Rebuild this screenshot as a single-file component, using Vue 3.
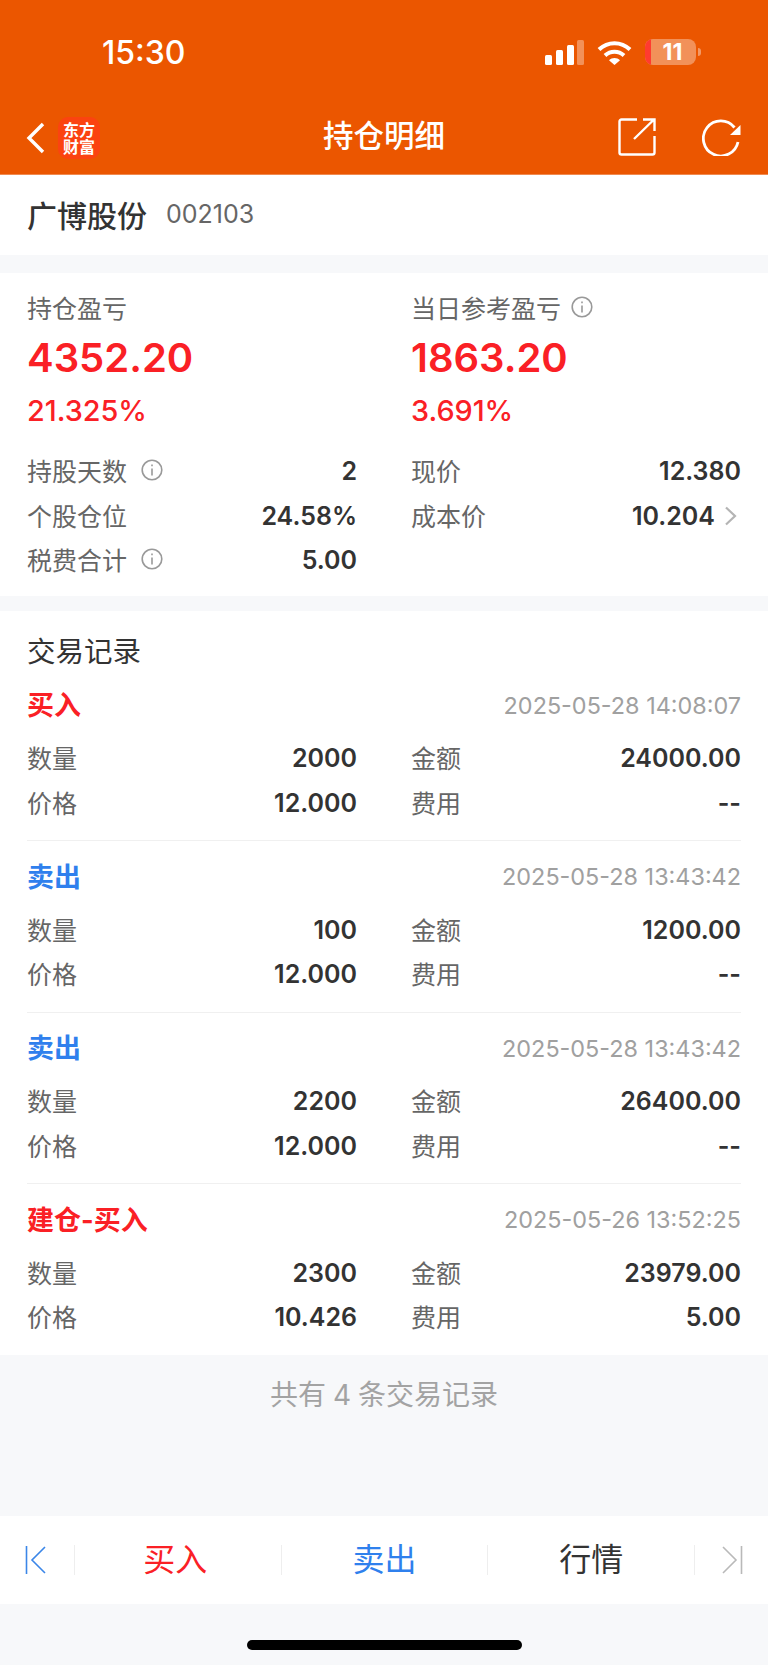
<template>
  <div class="page">
    <header class="top">
      <div class="status">
        <span class="time">15:30</span>
        <div class="status-icons">
          <svg width="39" height="25" viewBox="0 0 39 25">
            <rect x="0" y="15" width="7" height="10" rx="1.5" fill="#fff" />
            <rect x="11" y="10" width="7" height="15" rx="1.5" fill="#fff" />
            <rect x="22" y="5" width="7" height="20" rx="1.5" fill="#fff" />
            <rect x="32" y="0" width="7" height="25" rx="1.5" fill="#fff" fill-opacity="0.35" />
          </svg>
          <svg width="35" height="25" viewBox="0 0 35 25">
            <path d="M2 9.5C11 1 24 1 33 9.5" fill="none" stroke="#fff" stroke-width="4" />
            <path d="M8 15.5C13.5 10.5 21.5 10.5 27 15.5" fill="none" stroke="#fff" stroke-width="4" />
            <path d="M12 20.2C15 17.4 20 17.4 23 20.2L17.5 25Z" fill="#fff" />
          </svg>
          <div class="battery">
            <div class="battery-body"><span class="battery-red"></span><span class="battery-num">11</span></div>
            <span class="battery-tip"></span>
          </div>
        </div>
      </div>
      <nav class="nav">
        <div class="nav-left">
          <svg width="20" height="32" viewBox="0 0 20 32">
            <path d="M17 2L3 16L17 30" fill="none" stroke="#fff" stroke-width="3.4" />
          </svg>
          <div class="logo">东方财富</div>
        </div>
        <h1 class="nav-title">持仓明细</h1>
        <div class="nav-right">
          <svg width="38" height="38" viewBox="0 0 38 38">
            <path d="M19 1.5H3.5a2 2 0 0 0-2 2V34.5a2 2 0 0 0 2 2H34.500a2 2 0 0 0 2-2V18" fill="none" stroke="#fff" stroke-width="2.4" />
            <path d="M16 21L36 1.500M25 1.500H36.500V13" fill="none" stroke="#fff" stroke-width="2.4" />
          </svg>
          <svg width="39" height="38" viewBox="0 0 39 38">
            <path d="M32.500 9.500A17.500 17.500 0 1 0 36 24" fill="none" stroke="#fff" stroke-width="2.8" />
            <path d="M38.500 7V17H28Z" fill="#fff" />
          </svg>
        </div>
      </nav>
    </header>

    <section class="stock">
      <span class="stock-name">广博股份</span>
      <span class="stock-code">002103</span>
    </section>

    <section class="summary">
      <div class="summary-top">
        <div class="summary-col">
          <div class="label-line">持仓盈亏</div>
          <div class="big-num">4352.20</div>
          <div class="big-pct">21.325%</div>
        </div>
        <div class="summary-col">
          <div class="label-line">当日参考盈亏<svg class="info info-near" viewBox="0 0 22 22"><circle cx="11" cy="11" r="9.8" /><path d="M11 9.5V16.5" /><path d="M11 5.5V7.3" /></svg></div>
          <div class="big-num">1863.20</div>
          <div class="big-pct">3.691%</div>
        </div>
      </div>
      <div class="stats">
        <div v-for="s in stats" :key="s.label" class="row">
          <span class="row-label">{{ s.label }}<svg v-if="s.info" class="info" viewBox="0 0 22 22"><circle cx="11" cy="11" r="9.8" /><path d="M11 9.5V16.5" /><path d="M11 5.5V7.3" /></svg></span>
          <span class="row-value">{{ s.value }}<svg v-if="s.arrow" class="chev" width="12" height="20" viewBox="0 0 12 20"><path d="M1 1.500L10 10L1 18.500" fill="none" stroke="#b4b4b4" stroke-width="2.2" /></svg></span>
        </div>
      </div>
    </section>

    <section class="trades">
      <h2 class="trades-title">交易记录</h2>
      <div v-for="(t, i) in trades" :key="i" class="trade">
        <div class="trade-head">
          <span class="trade-type" :class="t.color">{{ t.type }}</span>
          <span class="trade-time">{{ t.time }}</span>
        </div>
        <div class="trade-grid">
          <div class="row"><span class="row-label">数量</span><span class="row-value">{{ t.qty }}</span></div>
          <div class="row"><span class="row-label">金额</span><span class="row-value">{{ t.amount }}</span></div>
          <div class="row"><span class="row-label">价格</span><span class="row-value">{{ t.price }}</span></div>
          <div class="row"><span class="row-label">费用</span><span class="row-value">{{ t.fee }}</span></div>
        </div>
      </div>
    </section>

    <div class="total">共有<span class="total-num">4</span>条交易记录</div>

    <div class="bar">
      <div class="bar-end">
        <svg width="22" height="28" viewBox="0 0 22 28">
          <path d="M1.5 0V28" stroke="#3b86e8" stroke-width="1.6" />
          <path d="M20 1L7 14L20 27" fill="none" stroke="#3b86e8" stroke-width="1.6" />
        </svg>
      </div>
      <button class="bar-btn red buy">买入</button>
      <button class="bar-btn blue">卖出</button>
      <button class="bar-btn dark">行情</button>
      <div class="bar-end last">
        <svg width="22" height="28" viewBox="0 0 22 28">
          <path d="M20.5 0V28" stroke="#b9b9b9" stroke-width="1.6" />
          <path d="M2 1L15 14L2 27" fill="none" stroke="#b9b9b9" stroke-width="1.6" />
        </svg>
      </div>
    </div>

    <div class="home-area"><span class="home"></span></div>
  </div>
</template>

<script setup>
const stats = [
  { label: '持股天数', value: '2', info: true },
  { label: '现价', value: '12.380' },
  { label: '个股仓位', value: '24.58%' },
  { label: '成本价', value: '10.204', arrow: true },
  { label: '税费合计', value: '5.00', info: true }
]

const trades = [
  { type: '买入', color: 'red', time: '2025-05-28 14:08:07', qty: '2000', amount: '24000.00', price: '12.000', fee: '--' },
  { type: '卖出', color: 'blue', time: '2025-05-28 13:43:42', qty: '100', amount: '1200.00', price: '12.000', fee: '--' },
  { type: '卖出', color: 'blue', time: '2025-05-28 13:43:42', qty: '2200', amount: '26400.00', price: '12.000', fee: '--' },
  { type: '建仓-买入', color: 'red', time: '2025-05-26 13:52:25', qty: '2300', amount: '23979.00', price: '10.426', fee: '5.00' }
]
</script>

<style>
html, body {
  margin: 0;
  background: #f7f8fa;
}
</style>

<style scoped>
.page {
  width: 768px;
  height: 1665px;
  overflow: hidden;
  display: flex;
  flex-direction: column;
  background: #f7f8fa;
  color: #333;
  font-family: Inter, "Noto Sans CJK SC", sans-serif;
}

.top {
  height: 174px;
  flex: none;
  background: #eb5600;
  border-bottom: 1px solid #f08a50;
  color: #fff;
}

.status {
  height: 104px;
  display: flex;
  align-items: flex-start;
  justify-content: space-between;
  padding: 0 67px 0 102px;
}

.time {
  margin-top: 34px;
  font-size: 32px;
  line-height: 38px;
  font-weight: 500;
}

.status-icons {
  display: flex;
  align-items: center;
  gap: 13px;
  margin-top: 39px;
}

.battery {
  display: flex;
  align-items: center;
  gap: 2px;
}

.battery-body {
  position: relative;
  width: 51px;
  height: 26px;
  border-radius: 8px;
  overflow: hidden;
  background: rgba(255, 255, 255, 0.35);
  display: flex;
  align-items: center;
  justify-content: center;
}

.battery-red {
  position: absolute;
  left: 0;
  top: 0;
  bottom: 0;
  width: 6px;
  background: #ff3b30;
}

.battery-num {
  font-size: 23px;
  font-weight: 700;
  line-height: 26px;
  padding-left: 4px;
}

.battery-tip {
  width: 3px;
  height: 8px;
  border-radius: 0 3px 3px 0;
  background: rgba(255, 255, 255, 0.4);
}

.nav {
  height: 70px;
  display: flex;
  align-items: center;
  justify-content: space-between;
  padding: 0 27px 0 26px;
  position: relative;
}

.nav-left {
  display: flex;
  align-items: center;
  gap: 12px;
  margin-top: -3px;
}

.logo {
  width: 42px;
  height: 42px;
  box-sizing: border-box;
  padding: 4px 5px;
  border-radius: 10px;
  background: #fb4310;
  font-size: 16px;
  line-height: 17px;
  font-weight: 700;
  font-family: "Noto Sans CJK SC", sans-serif;
  text-align: center;
}

.nav-title {
  position: absolute;
  left: 0;
  right: 0;
  top: 12px;
  margin: 0;
  text-align: center;
  font-size: 30.500px;
  line-height: 40px;
  font-weight: 500;
}

.nav-right {
  display: flex;
  align-items: center;
  gap: 46px;
  margin-top: -5px;
}

.stock {
  height: 80px;
  flex: none;
  box-sizing: border-box;
  padding: 0 27px 3px;
  background: #fff;
  display: flex;
  align-items: center;
  gap: 19px;
}

.stock-name {
  font-size: 30px;
  font-weight: 500;
  color: #333;
}

.stock-code {
  font-size: 25px;
  color: #666;
}

.summary {
  margin-top: 18px;
  height: 323px;
  flex: none;
  box-sizing: border-box;
  background: #fff;
  padding: 16px 27px 0;
}

.summary-top,
.stats,
.trade-grid {
  display: grid;
  grid-template-columns: 330px 330px;
  column-gap: 54px;
}

.label-line {
  display: flex;
  align-items: center;
  height: 36px;
  font-size: 25px;
  color: #666;
}

.big-num {
  margin-top: 7px;
  font-size: 40px;
  line-height: 52px;
  font-weight: 600;
  color: #fa2025;
}

.big-pct {
  margin-top: 9px;
  font-size: 28.800px;
  line-height: 36px;
  font-weight: 500;
  color: #fa2025;
}

.stats {
  margin-top: 20px;
}

.row {
  height: 44.500px;
  display: flex;
  align-items: center;
  justify-content: space-between;
}

.row-label {
  display: flex;
  align-items: center;
  font-size: 25px;
  color: #666;
  margin-bottom: 2px;
}

.row-value {
  display: flex;
  align-items: center;
  font-size: 25px;
  font-weight: 600;
  color: #333;
}

.info {
  width: 22px;
  height: 22px;
  margin-left: 14px;
  fill: none;
  stroke: #999;
  stroke-width: 1.6;
}

.info-near {
  margin-left: 10px;
}

.chev {
  margin-left: 10px;
  margin-right: 4px;
}

.trades {
  margin-top: 15px;
  height: 744px;
  flex: none;
  box-sizing: border-box;
  background: #fff;
  padding: 0 27px;
}

.trades-title {
  margin: 0;
  height: 77px;
  display: flex;
  align-items: center;
  font-size: 28.500px;
  font-weight: 400;
  color: #333;
}

.trade {
  padding-bottom: 15px;
  border-bottom: 1px solid #f0f0f0;
  margin-bottom: 18.500px;
}

.trade:last-child {
  margin-bottom: 0;
  border-bottom-color: #f7f8fa;
}

.trade-head {
  height: 34px;
  display: flex;
  align-items: center;
  justify-content: space-between;
}

.trade-type {
  font-size: 27px;
  font-weight: 700;
  margin-bottom: 3px;
}

.trade-time {
  font-size: 23.400px;
  color: #a0a0a0;
}

.trade-grid {
  margin-top: 14px;
}

.red {
  color: #fa2025;
}

.blue {
  color: #2f80ed;
}

.dark {
  color: #333;
}

.total {
  height: 161px;
  flex: none;
  box-sizing: border-box;
  padding-top: 22px;
  line-height: 36px;
  text-align: center;
  font-size: 28px;
  color: #a3a3a3;
}

.total-num {
  margin: 0 7px;
}

.bar {
  height: 88px;
  flex: none;
  background: #fff;
  display: flex;
  align-items: center;
}

.bar-end {
  width: 74px;
  height: 30px;
  flex: none;
  display: flex;
  align-items: center;
  justify-content: center;
  box-sizing: border-box;
  padding-right: 3px;
}

.bar-end.last {
  padding: 0 0 0 1px;
  border-left: 1px solid #eee;
}

.bar-btn {
  flex: 1;
  height: 30px;
  padding: 0;
  border: none;
  border-left: 1px solid #eee;
  background: none;
  font-family: inherit;
  font-size: 32px;
  line-height: 30px;
}

.bar-btn.buy {
  text-indent: -5px;
}

.home-area {
  flex: 1;
  display: flex;
  justify-content: center;
  padding-top: 36px;
}

.home {
  width: 275px;
  height: 10px;
  border-radius: 5px;
  background: #000;
}
</style>
